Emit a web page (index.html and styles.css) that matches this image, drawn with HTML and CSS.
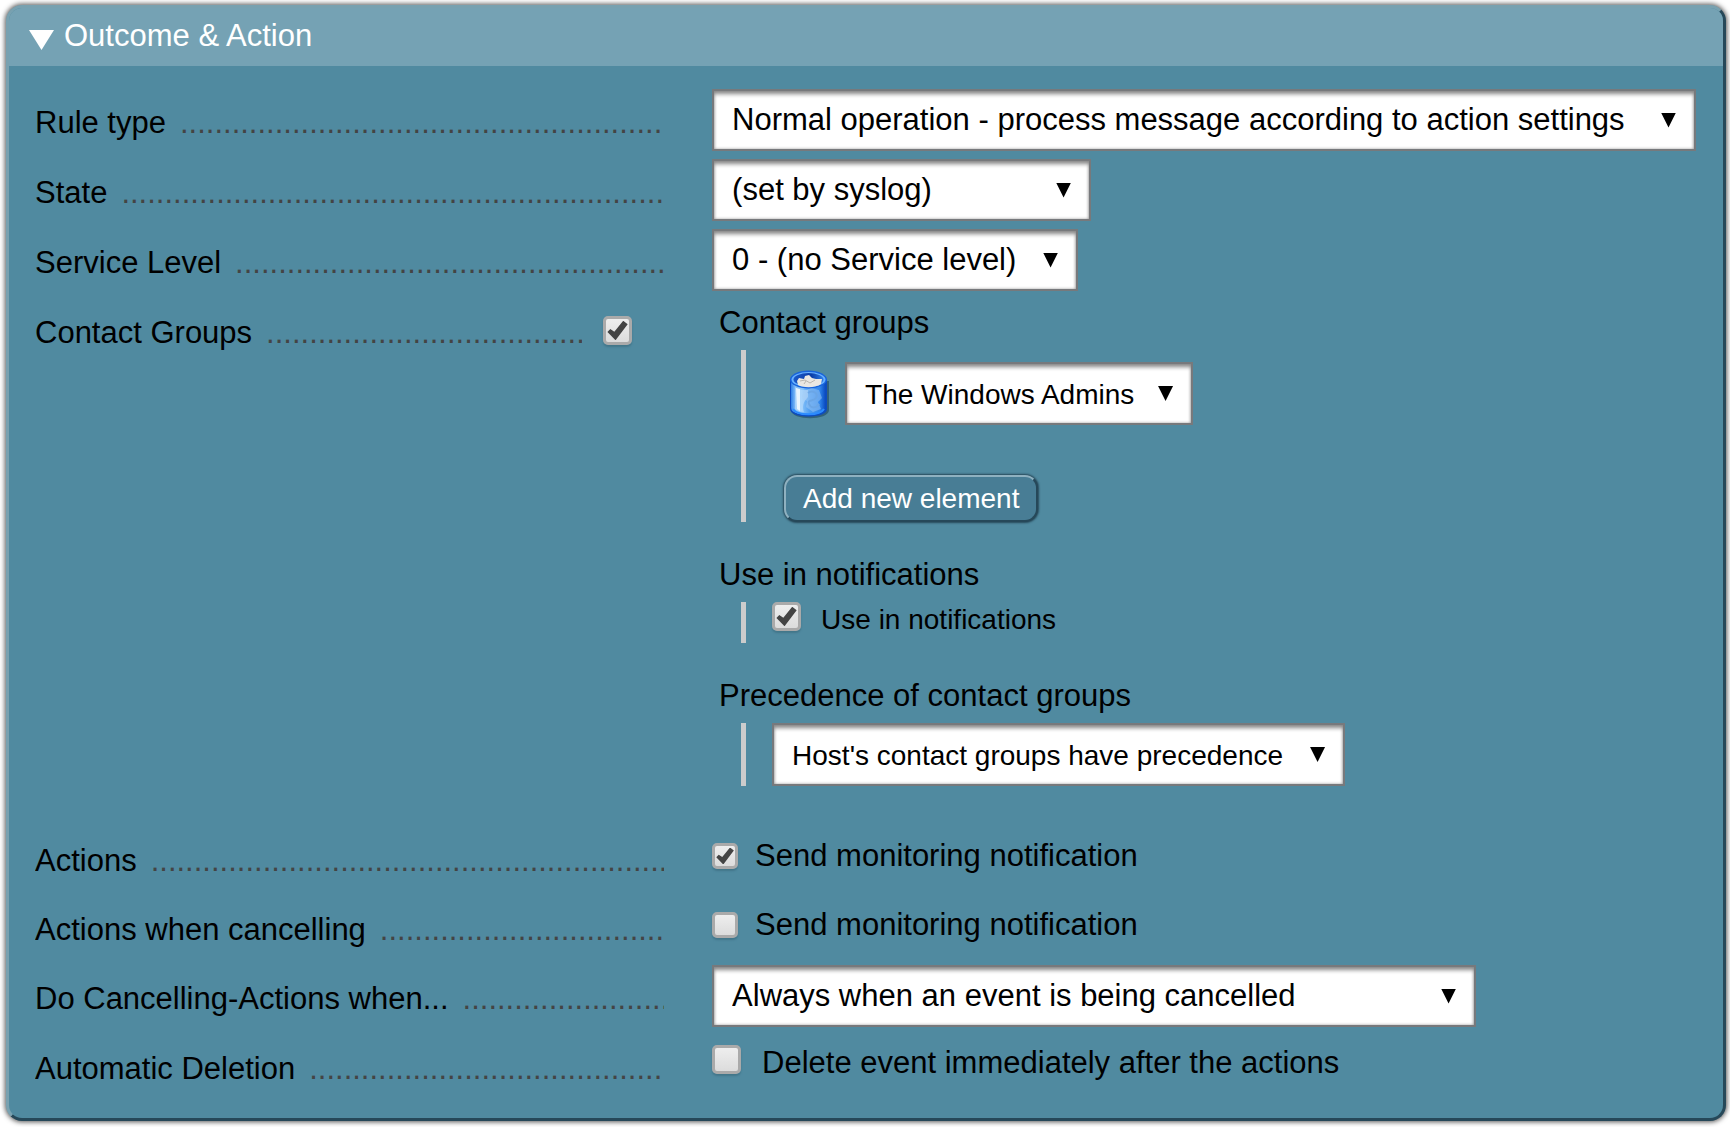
FILE: index.html
```html
<!DOCTYPE html>
<html lang="en">
<head>
<meta charset="utf-8">
<title>Outcome &amp; Action</title>
<link rel="stylesheet" href="styles.css">
</head>
<body>
<form class="panel">
  <h2 class="panel-head">
    <button type="button" class="fold" aria-expanded="true"><span class="fold-arrow"></span>Outcome &amp; Action</button>
  </h2>
  <div class="rows">
    <div class="row">
      <div class="legend"><label class="name" for="rule-type">Rule type</label></div>
      <div class="value"><span class="select select-full"><select id="rule-type"><option>Normal operation - process message according to action settings</option></select></span></div>
    </div>
    <div class="row">
      <div class="legend"><label class="name" for="state">State</label></div>
      <div class="value"><span class="select select-state"><select id="state"><option>(set by syslog)</option></select></span></div>
    </div>
    <div class="row">
      <div class="legend"><label class="name" for="level">Service Level</label></div>
      <div class="value"><span class="select select-level"><select id="level"><option>0 - (no Service level)</option></select></span></div>
    </div>
    <div class="row row-groups">
      <div class="legend legend-checked"><label class="name" for="groups-on">Contact Groups</label><input class="check" type="checkbox" id="groups-on" checked></div>
      <div class="value">
        <h3 class="sub-title">Contact groups</h3>
        <div class="sub sub-list">
          <div class="element">
            <button type="button" class="trash" aria-label="Delete this entry">
              <svg width="40" height="50" viewBox="0 0 40 50" aria-hidden="true">
                <defs>
                  <linearGradient id="can" x1="0" x2="1" y1="0" y2="0">
                    <stop offset="0" stop-color="#2f7fe6"/><stop offset=".12" stop-color="#7db9f8"/><stop offset=".3" stop-color="#8cc6fa"/><stop offset=".55" stop-color="#4c9cf0"/><stop offset=".85" stop-color="#2f84ea"/><stop offset="1" stop-color="#0c4fc4"/>
                  </linearGradient>
                  <linearGradient id="inside" x1="0" x2="1" y1="0" y2="0">
                    <stop offset="0" stop-color="#1a58c8"/><stop offset=".6" stop-color="#0a3ea8"/><stop offset="1" stop-color="#2f7fe8"/>
                  </linearGradient>
                </defs>
                <path d="M2 12v29c0 11 38 11 38 0V12z" fill="#173f5c" opacity=".55"/>
                <path d="M1 10v30c0 10 37 10 37 0V10z" fill="#0d4cc0"/>
                <path d="M2 11v28c0 9 34 9 34 0V11z" fill="url(#can)"/>
                <path d="M4 40c4 7 27 7 31 0" fill="none" stroke="#2b8bff" stroke-width="2"/>
                <path d="M6 18c4 3 9 3 13 3v7c-5 5-6 10-4 15-4 0-7-1-9-3z" fill="#bfe0fb" opacity=".6"/>
                <path d="M7 19l4 1v22l-3-2z" fill="#fff" opacity=".75"/>
                <path d="M15 22l7-3 8 2 3 8-4 4 3 7-8 3-7-5 1-6-5-3z" fill="#a8cff3" opacity=".45"/>
                <path d="M19 24c5-4 11 1 8 5s-9 1-7 6 8 4 10 0" fill="none" stroke="#6ba6e6" stroke-width="2"/>
                <ellipse cx="19.500" cy="10.500" rx="18.500" ry="9" fill="#1763dc"/>
                <ellipse cx="19.500" cy="10.500" rx="17" ry="7.600" fill="#67b0ff"/>
                <ellipse cx="19.500" cy="10.500" rx="15" ry="6.500" fill="url(#inside)"/>
                <path d="M8 12l2-3 5 1 1-3 4-1 3 3 4 1 6 0-1 5c-5 4-18 4-23 1z" fill="#e9e7e2"/>
                <path d="M11 12l5-1 5 3 5-3M15 15l2-3" fill="none" stroke="#bab7b0" stroke-width="1"/>
              </svg>
            </button>
            <span class="select select-small select-group"><select aria-label="Contact group"><option>The Windows Admins</option></select></span>
          </div>
          <button type="button" class="add">Add new element</button>
        </div>
        <h3 class="sub-title">Use in notifications</h3>
        <div class="sub sub-check">
          <label class="option option-top option-small"><input class="check" type="checkbox" checked>Use in notifications</label>
        </div>
        <h3 class="sub-title">Precedence of contact groups</h3>
        <div class="sub">
          <span class="select select-small select-precedence"><select aria-label="Precedence of contact groups"><option>Host's contact groups have precedence</option></select></span>
        </div>
      </div>
    </div>
    <div class="row">
      <div class="legend legend-short"><span class="name">Actions</span></div>
      <div class="value"><label class="option"><input class="check check-small" type="checkbox" checked>Send monitoring notification</label></div>
    </div>
    <div class="row">
      <div class="legend legend-short"><span class="name">Actions when cancelling</span></div>
      <div class="value"><label class="option"><input class="check check-small" type="checkbox">Send monitoring notification</label></div>
    </div>
    <div class="row">
      <div class="legend"><label class="name" for="cancel">Do Cancelling-Actions when...</label></div>
      <div class="value"><span class="select select-cancel"><select id="cancel"><option>Always when an event is being cancelled</option></select></span></div>
    </div>
    <div class="row">
      <div class="legend"><span class="name">Automatic Deletion</span></div>
      <div class="value value-delete"><label class="option option-top"><input class="check" type="checkbox">Delete event immediately after the actions</label></div>
    </div>
  </div>
</form>
</body>
</html>
```

FILE: styles.css
```css
*,
*::before,
*::after {
  box-sizing: border-box;
}

body {
  margin: 0;
  padding: 5px 4px 6px 6px;
  background: #fff;
  color: #000;
  font: 31px/48px "Liberation Sans", Arial, sans-serif;
}

h2,
h3 {
  margin: 0;
  font: inherit;
}

button,
select {
  margin: 0;
  padding: 0;
  border: 0;
  background: none;
  color: inherit;
  font: inherit;
}

.panel {
  overflow: hidden;
  border: 3px solid;
  border-color: #78a1b0 #264859 #264859 #78a1b0;
  border-radius: 16px;
  background: #508aa0;
  box-shadow: 0 0 5px 1px #555;
}

.panel-head {
  background: #75a2b4;
  color: #fff;
}

.fold {
  display: flex;
  align-items: center;
  gap: 10px;
  width: 100%;
  height: 58px;
  padding: 0 20px 3px;
}

.fold-arrow {
  width: 25px;
  height: 20px;
  margin-top: 9px;
  background: #fff;
  clip-path: polygon(0 0, 100% 0, 50% 100%);
}

.rows {
  display: grid;
  gap: 2px;
  padding: 23px 27px 15px 26px;
}

.row {
  display: grid;
  grid-template-columns: minmax(0, 39fr) minmax(0, 61fr);
  gap: 48px;
}

.row-groups {
  padding-bottom: 39px;
}

/* Label followed by a dotted leader */
.legend {
  display: flex;
  align-items: flex-start;
  height: 68px;
  line-height: 68px;
}

.legend-short {
  height: 67px;
}

.legend-checked {
  gap: 21px;
  padding-right: 32px;
}

.legend-checked .check {
  margin-top: 17px;
}

.name {
  display: flex;
  flex: 1;
  min-width: 0;
  gap: 14px;
  overflow: hidden;
  white-space: nowrap;
}

.name::after {
  content: "................................................................";
  flex: 1;
  min-width: 0;
  overflow: hidden;
  color: #444;
}

/* Drop-downs */
.select {
  display: grid;
  align-items: center;
  max-width: 100%;
  height: 62px;
}

.select select,
.select::after {
  grid-area: 1 / 1;
}

.select select {
  width: 100%;
  height: 100%;
  padding: 0 48px 0 18px;
  border: 2px solid #77797c;
  border-radius: 0;
  background: #fff;
  box-shadow: inset 0 4px 4px -1px #888, inset 0 0 3px #999;
  appearance: none;
}

.select::after {
  content: "";
  justify-self: end;
  width: 15px;
  height: 15px;
  margin-right: 20px;
  background: #000;
  clip-path: polygon(0 0, 100% 0, 50% 100%);
  pointer-events: none;
}

.select-small {
  height: 63px;
  font-size: 28px;
}

.select-small select {
  padding-top: 2px;
}

.select-full {
  width: 100%;
}

.select-state {
  width: 379px;
}

.select-level {
  width: 366px;
}

.select-group {
  width: 348px;
}

.select-precedence {
  width: 573px;
}

.select-cancel {
  width: 764px;
}

/* Nested parameters */
.sub-title {
  margin: 0 0 3px 7px;
}

.sub {
  margin: 0 0 29px 29px;
  padding-left: 26px;
  border-left: 5px solid #ccc;
}

.sub:last-child {
  margin-bottom: 0;
}

.sub-list {
  padding: 12px 0 0 38px;
}

.sub-check {
  height: 41px;
}

.element {
  display: flex;
  align-items: center;
  gap: 16px;
  margin: 0 0 50px 5px;
}

.trash {
  width: 40px;
  height: 50px;
}

.trash svg {
  display: block;
}

.add {
  display: block;
  height: 47px;
  padding: 0 17px;
  border: 2px solid;
  border-color: #8fb1c0 #264859 #264859 #8fb1c0;
  border-radius: 13px;
  background: #487d95;
  box-shadow: 0 0 2px 1px #264859;
  color: #fff;
  font-size: 28px;
  line-height: 43px;
}

/* Tick boxes */
.option {
  display: flex;
  align-items: center;
  gap: 17px;
  height: 58px;
}

.option-top {
  align-items: flex-start;
  gap: 21px;
  height: 36px;
  line-height: 36px;
}

.option-small {
  gap: 20px;
  font-size: 28px;
}

.value-delete {
  padding-top: 10px;
}

.check {
  display: grid;
  flex: none;
  place-items: center;
  width: 29px;
  height: 29px;
  margin: 0;
  border: 3px solid #aaa;
  border-radius: 5px;
  background: linear-gradient(#eee, #dcdcdc);
  box-shadow: 0 2px 2px #42768a;
  appearance: none;
}

.check-small {
  width: 26px;
  height: 26px;
}

.check:checked::before {
  content: "";
  width: 88%;
  height: 84%;
  background: #444;
  clip-path: polygon(0 58%, 14% 42%, 34% 56%, 78% 0, 100% 18%, 40% 100%);
}
```
